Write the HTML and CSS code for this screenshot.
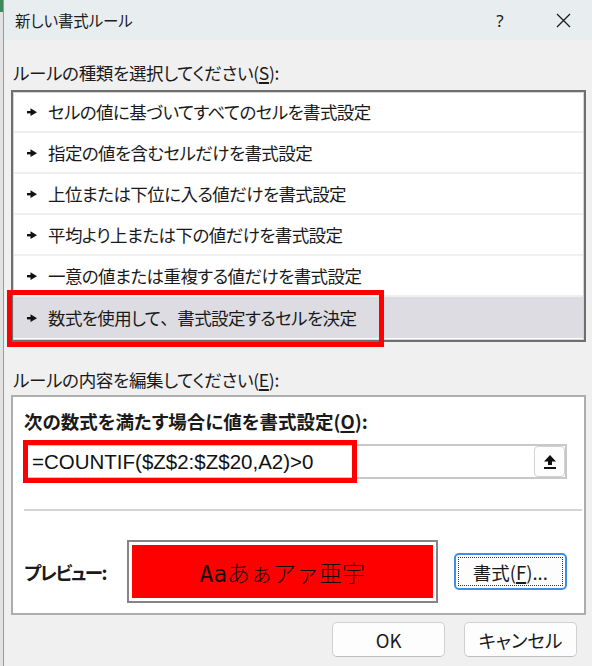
FILE: index.html
```html
<!DOCTYPE html>
<html lang="ja">
<head>
<meta charset="utf-8">
<title>新しい書式ルール</title>
<link rel="stylesheet" href="styles.css">
</head>
<body>
<div class="desk"></div>
<div class="window">
  <div class="titlebar">
    <span class="title">新しい書式ルール</span>
    <span class="help">?</span>
    <span class="close"><svg width="15" height="15" viewBox="0 0 15 15"><path d="M1 1 L14 14 M14 1 L1 14" stroke="#1c1c1c" stroke-width="1.3" fill="none"/></svg></span>
  </div>
  <div class="content">
    <div class="label">ルールの種類を選択してください(<u>S</u>):</div>
    <div class="listbox">
      <div class="row"><svg class="arrow" width="10" height="8" viewBox="0 0 10 8"><rect x="0" y="3" width="5" height="2.4" fill="#111"/><path d="M3.5 0.3 L10 4.2 L3.5 8 Z" fill="#111"/></svg><span>セルの値に基づいてすべてのセルを書式設定</span></div>
      <div class="row"><svg class="arrow" width="10" height="8" viewBox="0 0 10 8"><rect x="0" y="3" width="5" height="2.4" fill="#111"/><path d="M3.5 0.3 L10 4.2 L3.5 8 Z" fill="#111"/></svg><span>指定の値を含むセルだけを書式設定</span></div>
      <div class="row"><svg class="arrow" width="10" height="8" viewBox="0 0 10 8"><rect x="0" y="3" width="5" height="2.4" fill="#111"/><path d="M3.5 0.3 L10 4.2 L3.5 8 Z" fill="#111"/></svg><span>上位または下位に入る値だけを書式設定</span></div>
      <div class="row"><svg class="arrow" width="10" height="8" viewBox="0 0 10 8"><rect x="0" y="3" width="5" height="2.4" fill="#111"/><path d="M3.5 0.3 L10 4.2 L3.5 8 Z" fill="#111"/></svg><span>平均より上または下の値だけを書式設定</span></div>
      <div class="row"><svg class="arrow" width="10" height="8" viewBox="0 0 10 8"><rect x="0" y="3" width="5" height="2.4" fill="#111"/><path d="M3.5 0.3 L10 4.2 L3.5 8 Z" fill="#111"/></svg><span>一意の値または重複する値だけを書式設定</span></div>
      <div class="row selected"><svg class="arrow" width="10" height="8" viewBox="0 0 10 8"><rect x="0" y="3" width="5" height="2.4" fill="#111"/><path d="M3.5 0.3 L10 4.2 L3.5 8 Z" fill="#111"/></svg><span>数式を使用して<span class="fullw">、</span>書式設定するセルを決定</span></div>
    </div>
    <div class="label label-edit">ルールの内容を編集してください(<u>E</u>):</div>
    <div class="groupbox">
      <div class="label-bold">次の数式を満たす場合に値を書式設定(<u>O</u>):</div>
      <div class="inputbox">
        <span class="formula">=COUNTIF($Z$2:$Z$20,A2)&gt;0</span>
        <span class="refbtn"><svg width="14" height="16" viewBox="0 0 14 16"><path d="M7 1 L13 7.5 L9 7.5 L9 11 L5 11 L5 7.5 L1 7.5 Z" fill="#111"/><rect x="1" y="13" width="12" height="2" fill="#111"/></svg></span>
      </div>
      <div class="separator"></div>
      <div class="preview-row">
        <span class="label-bold preview-label">プレビュー:</span>
        <div class="preview-box"><div class="preview-fill">Aaあぁアァ亜宇</div></div>
        <div class="btn btn-format"><span class="focus">書式(<u>F</u>)...</span></div>
      </div>
    </div>
    <div class="buttons">
      <div class="btn btn-dlg">OK</div>
      <div class="btn btn-dlg">キャンセル</div>
    </div>
  </div>
</div>
<div class="mark mark-rule"></div>
<div class="mark mark-formula"></div>
</body>
</html>
```

FILE: styles.css
```css
html, body {
  margin: 0;
  padding: 0;
}
body {
  width: 592px;
  height: 666px;
  overflow: hidden;
  background: #e4e4e4;
  font-family: "Noto Sans CJK JP", "Noto Sans", sans-serif;
  font-feature-settings: "palt" 1;
  color: #1a1a1a;
  display: flex;
  position: relative;
}
.desk {
  width: 3px;
  background: linear-gradient(#3f8a5c 0, #3f8a5c 12px, #e2e2e2 12px);
}
.window {
  flex: 1;
  height: 666px;
  border-left: 1px solid #9a9a9a;
  background: #f0f0f0;
}
.titlebar {
  height: 40px;
  background: #e8eef0;
  display: flex;
  align-items: center;
  padding-left: 11px;
}
.title {
  font-size: 15.5px;
  letter-spacing: -0.1px;
  color: #1c1c1c;
  flex: 1;
}
.help {
  font-size: 17px;
  width: 20px;
  margin-right: 46px;
  text-align: center;
  font-family: "Noto Sans", sans-serif;
}
.close {
  width: 15px;
  height: 15px;
  margin-right: 21px;
  display: flex;
}
.content {
  padding: 0 2px 0 7px;
}
.label {
  font-size: 17.5px;
  letter-spacing: -0.3px;
  line-height: 24px;
  margin-top: 21px;
  padding-left: 2px;
}
.label u, .label-bold u, .btn u {
  text-decoration-thickness: 1.5px;
  text-underline-offset: 2px;
}
.listbox {
  margin-top: 5px;
  width: 575px;
  height: 252px;
  box-sizing: border-box;
  background: #fff;
  border: 2px solid #6f6f6f;
  box-shadow: inset 0 0 0 1px #d4d4d4;
  padding: 0 1px;
}
.row {
  height: 41px;
  box-sizing: border-box;
  display: flex;
  align-items: center;
  padding-left: 13px;
  font-size: 17.5px;
  letter-spacing: -0.6px;
  border-bottom: 2px solid #efefef;
}
.row.selected {
  background: #dcdce2;
  border-bottom: none;
}
.fullw {
  font-feature-settings: normal;
}
.arrow {
  margin-right: 11px;
  flex: none;
}
.label-edit {
  margin-top: 26px;
}
.groupbox {
  margin-top: 3px;
  width: 575px;
  height: 220px;
  box-sizing: border-box;
  background: #fff;
  border: 2px solid #adadad;
  padding: 12px 17px 0 11px;
}
.label-bold {
  font-size: 18.5px;
  font-weight: bold;
  line-height: 24px;
}
.inputbox {
  margin-top: 11px;
  height: 35px;
  box-sizing: border-box;
  border: 2px solid #c8c8c8;
  display: flex;
  align-items: center;
  padding-left: 6px;
}
.formula {
  flex: 1;
  font-family: "Liberation Sans", sans-serif;
  font-size: 20.5px;
  color: #111;
}
.refbtn {
  width: 31px;
  height: 31px;
  box-sizing: border-box;
  border: 1px solid #d2d2d2;
  border-radius: 4px;
  background: #fdfdfd;
  display: flex;
  align-items: center;
  justify-content: center;
}
.separator {
  height: 2px;
  background: #d4d4d4;
  margin: 30px -15px 0 0;
}
.preview-row {
  margin-top: 29px;
  display: flex;
  align-items: center;
}
.preview-label {
  width: 103px;
  flex: none;
  letter-spacing: -1.5px;
}
.preview-box {
  width: 312px;
  height: 63px;
  box-sizing: border-box;
  border: 2px solid #858585;
  padding: 3px;
  background: #fff;
}
.preview-fill {
  height: 100%;
  background: #ff0000;
  display: flex;
  align-items: center;
  justify-content: center;
  font-family: "DejaVu Sans Mono", "Noto Sans CJK JP", monospace;
  font-feature-settings: normal;
  font-weight: 300;
  font-size: 23px;
  color: #1a0a0a;
}
.btn {
  box-sizing: border-box;
  display: flex;
  align-items: center;
  justify-content: center;
  background: #fdfdfd;
  font-size: 18.5px;
  color: #1a1a1a;
}
.btn-format {
  margin-left: 16px;
  width: 114px;
  height: 37px;
  border: 2px solid #3d8fe3;
  border-radius: 5px;
  padding: 2px;
}
.focus {
  flex: 1;
  align-self: stretch;
  border: 1px dotted #333;
  display: flex;
  align-items: center;
  justify-content: center;
}
.buttons {
  margin-top: 7px;
  display: flex;
  justify-content: flex-end;
  gap: 19px;
  padding-right: 13px;
}
.btn-dlg {
  width: 113px;
  height: 35px;
  border: 1px solid #d0d0d0;
  border-bottom-color: #bdbdbd;
  border-radius: 5px;
}
.mark {
  position: absolute;
  box-sizing: border-box;
  border: 5px solid #ff0000;
}
.mark-rule {
  left: 7px;
  top: 290px;
  width: 377px;
  height: 57px;
}
.mark-formula {
  left: 23px;
  top: 440px;
  width: 334px;
  height: 43px;
}
```
